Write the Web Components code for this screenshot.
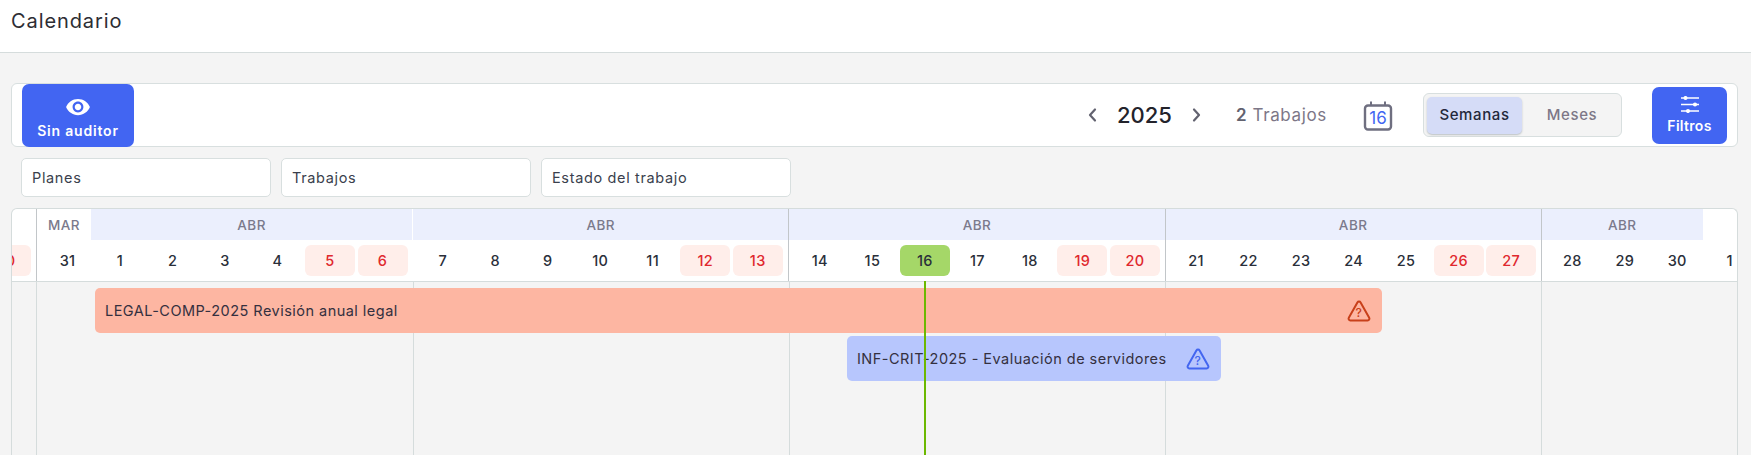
<!DOCTYPE html>
<html lang="es">
<head>
<meta charset="utf-8">
<title>Calendario</title>
<style>
  html, body { margin: 0; height: 455px; overflow: hidden; background: #f4f4f4; font-family: Inter, "Open Sans", sans-serif; }
</style>
</head>
<body>
<app-header>Calendario</app-header>
<cal-toolbar year="2025" jobs="2"></cal-toolbar>
<filter-row></filter-row>
<gantt-chart>
  <gantt-bar start="83" width="1287" top="6" tone="red">LEGAL-COMP-2025 Revisión anual legal</gantt-bar>
  <gantt-bar start="835" width="374" top="3" tone="blue">INF-CRIT-2025 - Evaluación de servidores</gantt-bar>
</gantt-chart>

<script>
class AppHeader extends HTMLElement {
  constructor() {
    super();
    this.attachShadow({ mode: 'open' });
    this.shadowRoot.innerHTML = `
      <style>
        :host { display: flex; box-sizing: border-box; height: 53px; padding: 9px 11px 0; background: #fff; border-bottom: 1px solid #d5dcdc; }
        h1 { margin: 0; font: 400 20px/24px Inter, sans-serif; letter-spacing: .9px; color: #2d2d33; }
      </style>
      <h1><slot></slot></h1>
    `;
  }
}

class ActionButton extends HTMLElement {
  constructor() {
    super();
    this.attachShadow({ mode: 'open' });
    this.shadowRoot.innerHTML = `
      <style>
        :host { display: flex; flex-direction: column; align-items: center; justify-content: center; gap: 5px; box-sizing: border-box; background: #4265f2; border-radius: 7px; color: #fff; font: 600 14px/18px Inter, sans-serif; }
        ::slotted(svg) { display: block; }
      </style>
      <slot name="icon"></slot>
      <slot></slot>
    `;
  }
}

class CalToolbar extends HTMLElement {
  constructor() {
    super();
    this.attachShadow({ mode: 'open' });
    this.shadowRoot.innerHTML = `
      <style>
        :host { display: flex; align-items: center; box-sizing: border-box; height: 64px; margin: 30px 13px 0 11px; padding: 0 10px; background: #fff; border: 1px solid #d8dfdf; border-radius: 6px; }
        .sin { width: 112px; height: 63px; margin-bottom: -1px; align-self: flex-start; padding-top: 3px; gap: 6px; letter-spacing: .8px; }
        .chev { display: block; width: 16px; height: 20px; fill: none; stroke: #62626f; stroke-width: 2.2; stroke-linecap: round; stroke-linejoin: round; }
        .prev { margin-left: auto; }
        .year { width: 53px; margin-left: 17px; font: 500 22px/28px Inter, sans-serif; color: #23232b; text-align: center; white-space: nowrap; }
        .next { margin-left: 19px; }
        .jobs { width: 91px; margin-left: 31px; font: 400 17px/22px Inter, sans-serif; letter-spacing: .6px; color: #7d7787; white-space: nowrap; }
        .jobs b { font-weight: 600; color: #62626f; }
        .cal { display: block; margin-left: 36px; width: 30px; height: 30px; margin-top: 1px; }
        .cal text { font: 400 17px Inter, sans-serif; fill: #4265f2; }
        .toggle { display: flex; align-items: center; box-sizing: border-box; width: 199px; height: 44px; margin-left: 30px; padding: 0 3px; background: #f4f4f4; border: 1px solid #d8dfdf; border-radius: 6px; font: 500 15px/18px Inter, sans-serif; letter-spacing: .6px; }
        .toggle span { display: flex; align-items: center; justify-content: center; height: 37px; color: #7d7787; }
        .toggle .on { width: 95px; background: #d5dcf7; border-radius: 5px; color: #23283a; box-shadow: 0 1px 2px #b9bfc2; }
        .toggle .off { flex: 1; padding-left: 4px; }
        .filtros { width: 75px; height: 57px; margin-left: 30px; gap: 4px; padding-top: 1px; letter-spacing: .3px; }
      </style>
      <action-button class="sin">
        <svg slot="icon" width="26" height="26" viewBox="0 0 24 24" fill="#fff" style="margin-bottom:-4px"><path d="M12 4.5C7 4.5 2.73 7.61 1 12c1.73 4.39 6 7.5 11 7.5s9.27-3.11 11-7.5c-1.73-4.39-6-7.5-11-7.5zM12 17c-2.76 0-5-2.24-5-5s2.24-5 5-5 5 2.24 5 5-2.24 5-5 5zm0-8c-1.66 0-3 1.34-3 3s1.34 3 3 3 3-1.34 3-3-1.34-3-3-3z"/></svg>
        Sin auditor
      </action-button>
      <svg class="chev prev" viewBox="0 0 16 20"><path d="M11 4.5 6 10l5 5.5"/></svg>
      <span class="year"></span>
      <svg class="chev next" viewBox="0 0 16 20"><path d="m5 4.5 5 5.5-5 5.5"/></svg>
      <span class="jobs"><b></b> Trabajos</span>
      <svg class="cal" viewBox="0 0 30 30" fill="none" stroke="#6f6f80">
        <rect x="2" y="4.5" width="26" height="24" rx="3" stroke-width="2.4"/>
        <path d="M8 0.5v4M22 0.5v4" stroke-width="2"/>
        <text x="15" y="23" text-anchor="middle" stroke="none">16</text>
      </svg>
      <div class="toggle"><span class="on">Semanas</span><span class="off">Meses</span></div>
      <action-button class="filtros">
        <svg slot="icon" width="20" height="17" viewBox="0 0 20 17" stroke="#fff" fill="#fff" stroke-width="1.5"><path d="M1 2h18M1 8.500h18M1 15h18"/><circle cx="5.500" cy="2" r="1.300"/><circle cx="15" cy="8.500" r="1.300"/><circle cx="8" cy="15" r="1.300"/></svg>
        Filtros
      </action-button>
    `;
  }

  connectedCallback() {
    this.shadowRoot.querySelector('.year').textContent = this.getAttribute('year');
    this.shadowRoot.querySelector('.jobs b').textContent = this.getAttribute('jobs');
  }
}

class FilterRow extends HTMLElement {
  constructor() {
    super();
    this.attachShadow({ mode: 'open' });
    this.shadowRoot.innerHTML = `
      <style>
        :host { display: flex; gap: 10px; height: 39px; margin: 11px 0 0 21px; }
        div { display: flex; align-items: center; box-sizing: border-box; width: 250px; padding-left: 10px; background: #fff; border: 1px solid #d8dfdf; border-radius: 5px; font: 400 14.5px/18px Inter, sans-serif; letter-spacing: .65px; color: #3a3f4d; }
      </style>
      <div>Planes</div>
      <div>Trabajos</div>
      <div>Estado del trabajo</div>
    `;
  }
}

class GanttChart extends HTMLElement {
  constructor() {
    super();
    this.attachShadow({ mode: 'open' });
    const week = (days, sep = '') => `<div class="week ${sep}">${days.map(d => {
      const cls = d.type ? ' ' + d.type : '';
      return `<span class="day${cls}">${d.n}</span>`;
    }).join('')}</div>`;
    const run = (from, to, lastWeekend = true) => {
      const out = [];
      for (let n = from; n <= to; n++) out.push({ n, type: lastWeekend && n > to - 2 ? 'off' : '' });
      return out;
    };
    const today = run(14, 20).map(d => (d.n === 16 ? { n: 16, type: 'today' } : d));
    this.shadowRoot.innerHTML = `
      <style>
        :host { display: block; box-sizing: border-box; height: 247px; margin: 11px 13px 0 11px; border: 1px solid #d5dcdc; border-bottom: 0; border-radius: 6px 6px 0 0; overflow: hidden; background: #fff; color: #2a2f3a; }
        .months { display: flex; height: 31px; }
        .lead { flex: none; width: 24px; overflow: hidden; }
        .month { display: flex; align-items: center; justify-content: center; box-sizing: border-box; flex: none; background: #ebeffd; border-left: 1px solid #c2c6c9; font: 500 13.500px/18px Inter, sans-serif; letter-spacing: .5px; color: #7b7a8c; }
        .month.mar { width: 55px; background: #fff; }
        .month.soft { border-left: 0; }
        .month.wsoft { border-left-color: #fff; }
        .days { display: flex; height: 41px; border-bottom: 1px solid #d5dcdc; }
        .days .lead { display: flex; justify-content: flex-end; padding: 5px 5px 5px 0; box-sizing: border-box; }
        .week { display: flex; flex: none; box-sizing: border-box; width: 376.2px; padding: 5px 0 5px 5.500px; border-left: 1px solid #c2c6c9; }
        .week.soft { padding-left: 4.500px; border-left-color: transparent; }
        .week.end { width: 197px; }
        .day { flex: none; box-sizing: border-box; width: 50px; margin-right: 2.500px; border-radius: 6px; font: 500 14.500px/31px Inter, sans-serif; letter-spacing: .3px; text-align: center; }
        .day.off { background: #ffeeea; color: #e0282e; }
        .day.today { background: #a5d768; }
        .track { position: relative; height: 174px; padding-top: .1px; background:
          linear-gradient(#d5dcdc, #d5dcdc) no-repeat 24px 0 / 1px 100%,
          linear-gradient(#d5dcdc, #d5dcdc) no-repeat 401px 0 / 1px 100%,
          linear-gradient(#d5dcdc, #d5dcdc) no-repeat 777px 0 / 1px 100%,
          linear-gradient(#d5dcdc, #d5dcdc) no-repeat 1153px 0 / 1px 100%,
          linear-gradient(#d5dcdc, #d5dcdc) no-repeat 1529px 0 / 1px 100%,
          #f4f4f4; }
        .now { position: absolute; left: 912px; top: -1px; bottom: 0; width: 2px; background: #6cb800; }
      </style>
      <div class="months">
        <div class="lead"></div>
        <div class="month mar">MAR</div>
        <div class="month soft" style="width:321.200px">ABR</div>
        <div class="month wsoft" style="width:376.200px">ABR</div>
        <div class="month" style="width:376.200px">ABR</div>
        <div class="month" style="width:376.200px">ABR</div>
        <div class="month" style="width:162px">ABR</div>
      </div>
      <div class="days">
        <div class="lead"><span class="day off" style="margin:0;flex:none">30</span></div>
        ${week([{ n: 31 }, ...run(1, 6)])}
        ${week(run(7, 13), 'soft')}
        ${week(today)}
        ${week(run(21, 27))}
        ${week(run(28, 30, false).concat({ n: 1 }), 'end')}
      </div>
      <div class="track"><slot></slot><div class="now"></div></div>
    `;
  }
}

class GanttBar extends HTMLElement {
  constructor() {
    super();
    this.attachShadow({ mode: 'open' });
    this.shadowRoot.innerHTML = `
      <style>
        :host { display: flex; align-items: center; justify-content: space-between; box-sizing: border-box; height: 45px; padding: 0 11px 0 10px; border-radius: 5px; font: 400 14.500px/18px Inter, sans-serif; letter-spacing: .47px; color: #34303f; }
        :host([tone="red"]) { background: #fdb6a2; --warn: #c8401a; }
        :host([tone="blue"]) { background: #b7c6fd; --warn: #4366f0; }
        svg { display: block; flex: none; }
        text { font: 500 12px Inter, sans-serif; fill: var(--warn); }
      </style>
      <span><slot></slot></span>
      <svg width="24" height="24" viewBox="0 0 24 24" fill="none" stroke="var(--warn)" stroke-width="2" stroke-linejoin="round">
        <path d="M12 2.500a1.800 1.800 0 0 1 1.600.9l8.600 15.300a1.800 1.800 0 0 1-1.600 2.700H3.400a1.800 1.800 0 0 1-1.600-2.700l8.600-15.300a1.800 1.800 0 0 1 1.600-.9z"/>
        <text x="12" y="18" text-anchor="middle" stroke="none">?</text>
      </svg>
    `;
  }

  connectedCallback() {
    this.style.marginLeft = this.getAttribute('start') + 'px';
    this.style.width = this.getAttribute('width') + 'px';
    this.style.marginTop = this.getAttribute('top') + 'px';
  }
}

customElements.define('app-header', AppHeader);
customElements.define('action-button', ActionButton);
customElements.define('cal-toolbar', CalToolbar);
customElements.define('filter-row', FilterRow);
customElements.define('gantt-chart', GanttChart);
customElements.define('gantt-bar', GanttBar);
</script>
</body>
</html>
